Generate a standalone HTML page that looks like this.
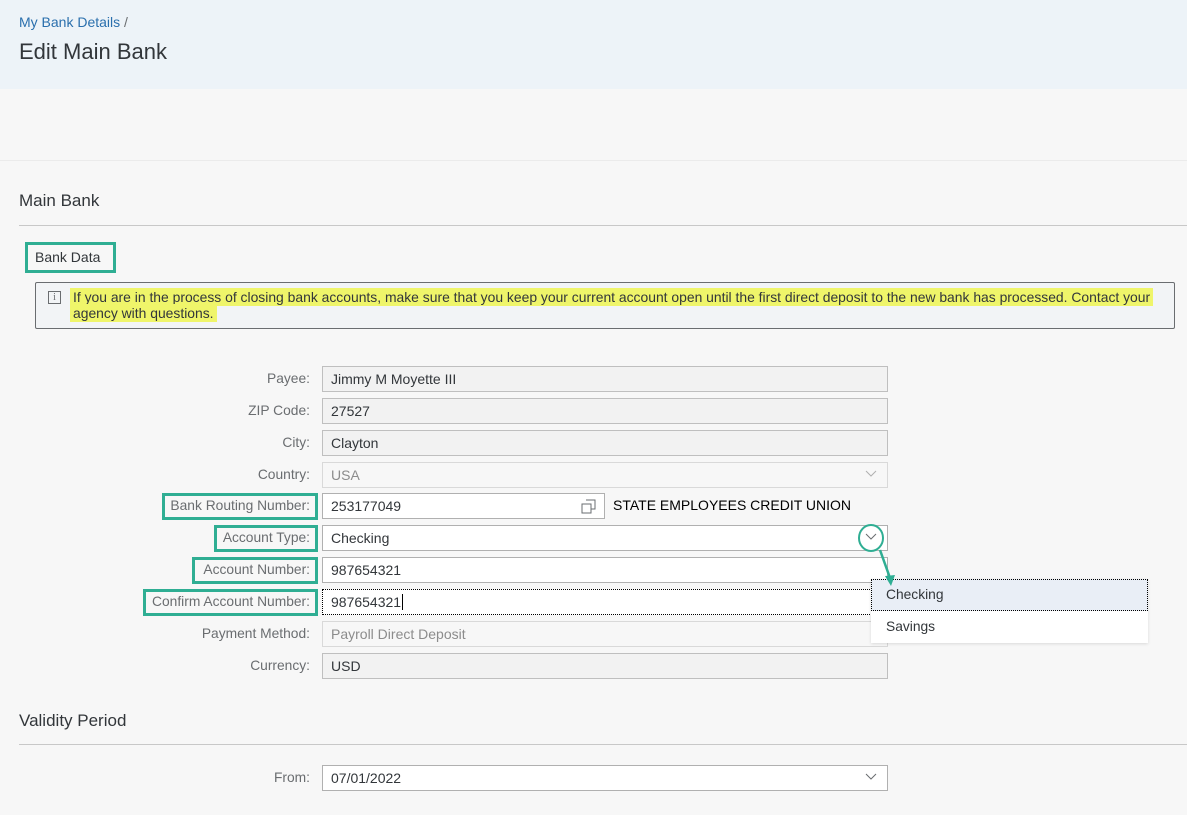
<!DOCTYPE html>
<html><head><meta charset="utf-8"><style>
*{box-sizing:border-box;margin:0;padding:0}
body{width:1187px;height:815px;background:#f7f7f7;font-family:"Liberation Sans",sans-serif;position:relative;overflow:hidden;color:#32363a}
.a{position:absolute}
.lbl{position:absolute;right:877px;font-size:13.8px;color:#6a6d70;text-align:right;line-height:26px}
.in{position:absolute;left:322px;width:566px;height:26px;border:1px solid #bfbfbf;background:#f2f2f2;font-size:14px;line-height:24px;padding-left:8px;color:#32363a}
.w{background:#fff;border-color:#b0b0b0}
.dis{color:#8c8c8c;background:#f7f7f7;border-color:#d9d9d9}
.box{position:absolute;border:3px solid #2fae93}
.chev{position:absolute;right:10px;top:7px;width:12px;height:8px}
</style></head><body>
<div class="a" style="left:0;top:0;width:1187px;height:89px;background:#edf3f8"></div>
<div class="a" style="left:19px;top:14px;font-size:14px;color:#2a6fad">My Bank Details <span style="color:#6a6d70">/</span></div>
<div class="a" style="left:19px;top:39px;font-size:22px;color:#32363a">Edit Main Bank</div>
<div class="a" style="left:0;top:160px;width:1187px;height:1px;background:#ebebeb"></div>
<div class="a" style="left:19px;top:191px;font-size:17px">Main Bank</div>
<div class="a" style="left:19px;top:225px;width:1168px;height:1px;background:#c8c8c8"></div>
<div class="box" style="left:25px;top:242px;width:91px;height:31px"></div>
<div class="a" style="left:35px;top:249px;font-size:14px">Bank Data</div>
<div class="a" style="left:35px;top:282px;width:1140px;height:47px;border:1px solid #6a6d70;border-radius:2px;background:#f2f4f6"></div>
<div class="a" style="left:48px;top:291px;width:13px;height:13px;border:1px solid #6a6d70;font-size:10px;line-height:11px;text-align:center;color:#6a6d70;font-family:'Liberation Serif',serif">i</div>
<div class="a" style="left:70px;top:289px;width:1100px;font-size:13.9px;line-height:16px;color:#32363a;white-space:nowrap"><span style="background:#eff56a;padding:1px 3px">If you are in the process of closing bank accounts, make sure that you keep your current account open until the first direct deposit to the new bank has processed. Contact your</span><br><span style="background:#eff56a;padding:1px 3px">agency with questions.</span></div>

<div class="lbl" style="top:366px">Payee:</div><div class="in" style="top:366px">Jimmy M Moyette III</div>
<div class="lbl" style="top:398px">ZIP Code:</div><div class="in" style="top:398px">27527</div>
<div class="lbl" style="top:430px">City:</div><div class="in" style="top:430px">Clayton</div>
<div class="lbl" style="top:462px">Country:</div><div class="in dis" style="top:462px">USA<svg class="chev" viewBox="0 0 12 8"><path d="M1 1l5 5 5-5" fill="none" stroke="#b0b0b0" stroke-width="1"/></svg></div>
<div class="box" style="left:162px;top:493px;width:156px;height:27px"></div>
<div class="lbl" style="top:493px">Bank Routing Number:</div>
<div class="in w" style="top:493px;width:283px">253177049<svg class="a" style="right:8px;top:5px;width:15px;height:15px" viewBox="0 0 15 15"><path d="M5 1h9v9h-4M1 5h9v9H1z" fill="none" stroke="#6a6d70"/></svg></div>
<div class="a" style="left:613px;top:497px;font-size:14px;color:#000">STATE EMPLOYEES CREDIT UNION</div>
<div class="box" style="left:214px;top:525px;width:104px;height:27px"></div>
<div class="lbl" style="top:525px">Account Type:</div>
<div class="in w" style="top:525px">Checking<svg class="chev" viewBox="0 0 12 8"><path d="M1 1l5 5 5-5" fill="none" stroke="#6a6d70" stroke-width="1"/></svg></div>
<div class="box" style="left:192px;top:557px;width:126px;height:27px"></div>
<div class="lbl" style="top:557px">Account Number:</div>
<div class="in w" style="top:557px">987654321</div>
<div class="box" style="left:143px;top:589px;width:175px;height:27px"></div>
<div class="lbl" style="top:589px">Confirm Account Number:</div>
<div class="in w" style="top:589px;border:1px dotted #000">987654321<span style="border-left:1px solid #000;margin-left:1px"></span></div>
<div class="lbl" style="top:621px">Payment Method:</div><div class="in dis" style="top:621px">Payroll Direct Deposit</div>
<div class="lbl" style="top:653px">Currency:</div><div class="in" style="top:653px">USD</div>

<div class="a" style="left:871px;top:579px;width:277px;height:64px;background:#fff;box-shadow:0 1px 3px rgba(0,0,0,.12)"></div>
<div class="a" style="left:871px;top:579px;width:277px;height:32px;background:#e9eef6;border:1px dotted #000;font-size:13.8px;line-height:30px;padding-left:14px;color:#32363a">Checking</div>
<div class="a" style="left:886px;top:619px;font-size:13.8px;color:#32363a">Savings</div>
<svg class="a" style="left:850px;top:520px;width:50px;height:70px" viewBox="0 0 50 70"><ellipse cx="21" cy="18" rx="12" ry="13" fill="none" stroke="#2fae93" stroke-width="2"/><path d="M30 30l10 28" stroke="#2fae93" stroke-width="2.5"/><path d="M35 56l6 10 4-11z" fill="#2fae93"/></svg>

<div class="a" style="left:19px;top:711px;font-size:17px">Validity Period</div>
<div class="a" style="left:19px;top:744px;width:1168px;height:1px;background:#c8c8c8"></div>
<div class="lbl" style="top:765px">From:</div>
<div class="in w" style="top:765px">07/01/2022<svg class="chev" viewBox="0 0 12 8"><path d="M1 1l5 5 5-5" fill="none" stroke="#6a6d70" stroke-width="1"/></svg></div>
</body></html>
